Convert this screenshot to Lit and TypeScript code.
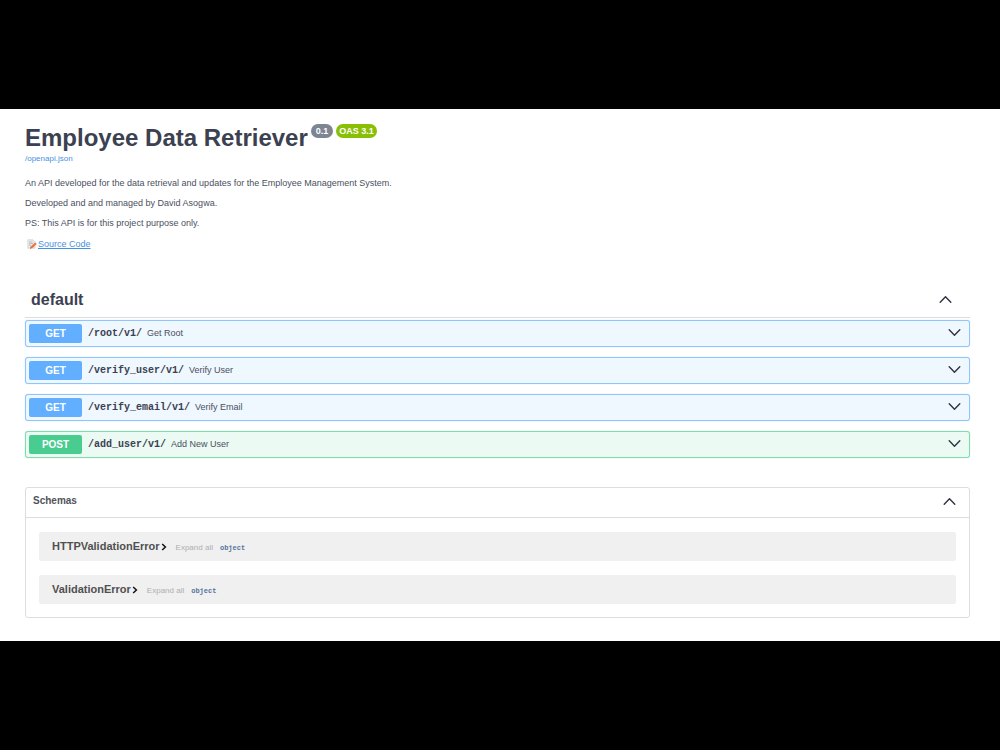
import { LitElement, html, css, svg } from "lit";
import { customElement, property, state } from "lit/decorators.js";
import { classMap } from "lit/directives/class-map.js";

interface Operation {
  method: "get" | "post";
  path: string;
  summary: string;
}

const OPERATIONS: Operation[] = [
  { method: "get", path: "/root/v1/", summary: "Get Root" },
  { method: "get", path: "/verify_user/v1/", summary: "Verify User" },
  { method: "get", path: "/verify_email/v1/", summary: "Verify Email" },
  { method: "post", path: "/add_user/v1/", summary: "Add New User" },
];

const SCHEMAS = ["HTTPValidationError", "ValidationError"];

const chevronUp = svg`<path d="M1.2 7.2 6.5 1.8 11.8 7.2" />`;
const chevronDown = svg`<path d="M1.2 1.8 6.5 7.2 11.8 1.8" />`;

const chevronStyles = css`
  .chevron {
    display: block;
    flex: none;
    width: 13px;
    height: 9px;
    fill: none;
    stroke: #2f3340;
    stroke-width: 1.4;
    stroke-linecap: round;
    stroke-linejoin: round;
  }
`;

@customElement("operation-row")
export class OperationRow extends LitElement {
  @property({ attribute: false }) operation!: Operation;

  static styles = [
    chevronStyles,
    css`
      :host {
        display: block;
      }
      .row {
        box-sizing: border-box;
        display: flex;
        align-items: center;
        width: 100%;
        height: 27px;
        margin: 0;
        padding: 0 8px 0 3px;
        border: 1px solid #8fc5ff;
        border-radius: 3px;
        background: #eff7ff;
        box-shadow: 0 0 1px rgba(97, 175, 254, 0.6);
        font-family: "Liberation Sans", Arial, sans-serif;
        color: #3b4151;
        text-align: left;
        cursor: pointer;
      }
      .post {
        border-color: #7fdcb0;
        background: #ecfaf4;
        box-shadow: 0 0 1px rgba(73, 204, 144, 0.6);
      }
      .method {
        flex: none;
        width: 53px;
        border-radius: 2px;
        background: #61affe;
        color: #fff;
        font-size: 10px;
        font-weight: 700;
        line-height: 19px;
        text-align: center;
      }
      .post .method {
        background: #49cc90;
      }
      .path {
        margin-left: 6px;
        font-family: "Liberation Mono", monospace;
        font-size: 10px;
        font-weight: 700;
        line-height: 19px;
      }
      .summary {
        flex: 1;
        margin-left: 5px;
        color: #4a5060;
        font-size: 9px;
        line-height: 19px;
      }
      .chevron {
        margin-bottom: 3px;
      }
    `,
  ];

  render() {
    const { method, path, summary } = this.operation;
    return html`
      <button class=${classMap({ row: true, post: method === "post" })} type="button">
        <span class="method">${method.toUpperCase()}</span>
        <span class="path">${path}</span>
        <span class="summary">${summary}</span>
        <svg class="chevron" viewBox="0 0 13 9" aria-hidden="true">${chevronDown}</svg>
      </button>
    `;
  }
}

@customElement("schema-row")
export class SchemaRow extends LitElement {
  @property() name = "";

  static styles = css`
    :host {
      display: flex;
      align-items: baseline;
      padding: 7px 13px 6px;
      border-radius: 2px;
      background: #f0f0f0;
      font-family: "Liberation Sans", Arial, sans-serif;
    }
    button {
      margin: 0;
      padding: 0;
      border: 0;
      background: none;
      font-family: inherit;
      line-height: 14px;
      cursor: pointer;
    }
    .name {
      display: flex;
      align-items: center;
      gap: 1px;
      color: #505050;
      font-size: 11px;
      font-weight: 700;
    }
    .arrow {
      display: block;
      width: 6px;
      height: 8px;
      margin-top: 1px;
      fill: none;
      stroke: #111;
      stroke-width: 1.5;
    }
    .expand {
      margin-left: 9px;
      color: #afaeae;
      font-size: 8px;
    }
    .type {
      margin-left: 7px;
      color: #55749f;
      font-family: "Liberation Mono", monospace;
      font-size: 7px;
      font-weight: 700;
      line-height: 14px;
    }
  `;

  render() {
    return html`
      <button class="name" type="button">
        ${this.name}
        <svg class="arrow" viewBox="0 0 6 8" aria-hidden="true">
          <path d="M1.2 1 4.4 4 1.2 7" />
        </svg>
      </button>
      <button class="expand" type="button">Expand all</button>
      <strong class="type">object</strong>
    `;
  }
}

@customElement("app-root")
export class AppRoot extends LitElement {
  @state() private operationsOpen = true;
  @state() private schemasOpen = true;

  static styles = [
    chevronStyles,
    css`
      :host {
        box-sizing: border-box;
        display: block;
        min-height: 100vh;
        padding: 109px 0 110px;
        background: #000;
        color: #3b4151;
        font-family: "Liberation Sans", Arial, sans-serif;
      }
      .page {
        padding: 14px 30px 23px 25px;
        background: #fff;
      }
      .heading {
        display: flex;
        align-items: flex-start;
      }
      h1,
      h2,
      p {
        margin: 0;
      }
      h1 {
        font-size: 24px;
        line-height: 30px;
      }
      .badge {
        margin: 1px 0 0 3px;
        padding: 0 5px;
        border-radius: 7px;
        background: #7d8492;
        color: #fff;
        font-size: 9px;
        font-weight: 700;
        line-height: 14px;
      }
      .oas {
        padding: 0 3px;
        background: #89bf04;
      }
      a {
        color: #4990e2;
      }
      .spec {
        display: block;
        font-size: 8px;
        line-height: 12px;
        text-decoration: none;
      }
      .description {
        display: grid;
        gap: 8px;
        margin-top: 12px;
        color: #4a5060;
        font-size: 9px;
        line-height: 12px;
      }
      .source {
        display: flex;
        align-items: center;
        gap: 1px;
        margin-top: 9px;
        padding-left: 2px;
        font-size: 9px;
        line-height: 12px;
      }
      .memo {
        width: 10px;
        height: 10px;
      }
      .toggle {
        display: flex;
        align-items: center;
        justify-content: space-between;
        width: 100%;
        margin: 0;
        border: 0;
        background: none;
        color: inherit;
        font: inherit;
        text-align: left;
        cursor: pointer;
      }
      .tag {
        margin-top: 34px;
        border-bottom: 1px solid #dcdde0;
        font-size: 16px;
        line-height: 20px;
      }
      .tag .toggle {
        padding: 6px 18px 7px 6px;
      }
      .tag .chevron {
        margin-bottom: 2px;
      }
      .operations {
        display: grid;
        gap: 10px;
        margin-top: 2px;
      }
      .models {
        margin-top: 29px;
        border: 1px solid #dcdde0;
        border-radius: 3px;
      }
      .models h2 {
        color: #505459;
        font-size: 10px;
        line-height: 14px;
      }
      .models .toggle {
        padding: 6px 13px 9px 7px;
      }
      .schemas {
        display: grid;
        gap: 14px;
        padding: 14px 13px 13px;
        border-top: 1px solid #dcdde0;
      }
    `,
  ];

  private chevron(open: boolean) {
    return html`<svg class="chevron" viewBox="0 0 13 9" aria-hidden="true">
      ${open ? chevronUp : chevronDown}
    </svg>`;
  }

  render() {
    return html`
      <main class="page">
        <header>
          <div class="heading">
            <h1>Employee Data Retriever</h1>
            <span class="badge">0.1</span>
            <span class="badge oas">OAS 3.1</span>
          </div>
          <a class="spec" href="/openapi.json">/openapi.json</a>
          <div class="description">
            <p>An API developed for the data retrieval and updates for the Employee Management System.</p>
            <p>Developed and and managed by David Asogwa.</p>
            <p>PS: This API is for this project purpose only.</p>
          </div>
          <div class="source">
            <svg class="memo" viewBox="0 0 10 10" aria-hidden="true">
              <path d="M.8 .8H6L8 2.8V9.2H.8Z" fill="#e9eaec" stroke="#c3c7cc" stroke-width=".6" />
              <path d="M2 3H5.5M2 4.6H6M2 6.2H4" stroke="#9ca5ad" stroke-width=".6" />
              <path d="M8.3 3.4 9.8 4.9 5.4 9 3.2 9.4 3.8 7.4Z" fill="#f0703a" />
              <path d="M3.2 9.4 3.5 8.3 4.3 9.2Z" fill="#5b4434" />
            </svg>
            <a href="#source">Source Code</a>
          </div>
        </header>

        <section>
          <h2 class="tag">
            <button
              class="toggle"
              type="button"
              aria-expanded=${this.operationsOpen}
              @click=${() => (this.operationsOpen = !this.operationsOpen)}
            >
              default ${this.chevron(this.operationsOpen)}
            </button>
          </h2>
          ${this.operationsOpen
            ? html`<div class="operations">
                ${OPERATIONS.map((op) => html`<operation-row .operation=${op}></operation-row>`)}
              </div>`
            : null}
        </section>

        <section class="models">
          <h2>
            <button
              class="toggle"
              type="button"
              aria-expanded=${this.schemasOpen}
              @click=${() => (this.schemasOpen = !this.schemasOpen)}
            >
              Schemas ${this.chevron(this.schemasOpen)}
            </button>
          </h2>
          ${this.schemasOpen
            ? html`<div class="schemas">
                ${SCHEMAS.map((name) => html`<schema-row name=${name}></schema-row>`)}
              </div>`
            : null}
        </section>
      </main>
    `;
  }
}
